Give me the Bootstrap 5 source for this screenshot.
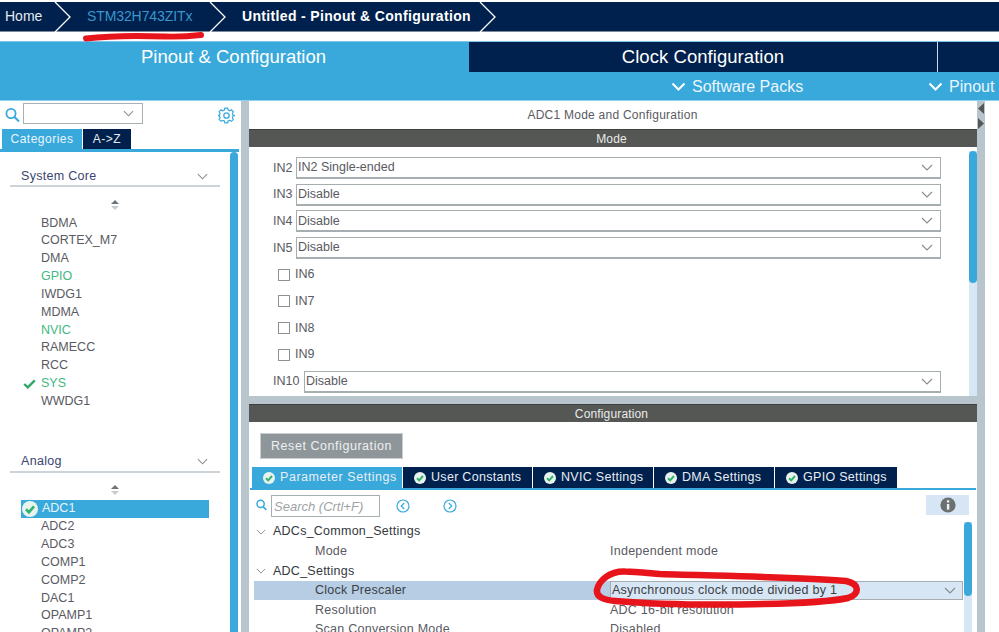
<!DOCTYPE html>
<html lang="en">
<head>
<meta charset="utf-8">
<title>STM32 Pinout</title>
<link href="https://cdn.jsdelivr.net/npm/bootstrap@5.3.0/dist/css/bootstrap.min.css" rel="stylesheet">
<style>
:root{--navy:#00214d;--sky:#39a9dc;--steel:#b9c5cc;--dark:#555755;--pale:#d6e6f5;--txt:#5a5a62;}
html,body{height:100%;overflow:hidden;background:#fff;}
body{font-family:"Liberation Sans",Arial,sans-serif;font-size:12.5px;color:var(--txt);}
.stage{position:relative;width:999px;height:632px;overflow:hidden;}
.crumbs{height:30px;margin-top:2px;background:var(--navy);color:#fff;font-size:14px;border-bottom:1px solid #7d8a9a;}
.crumb-home{width:70px;padding-left:5px;color:#e4e9ef;}
.crumb-chip{width:155px;padding-left:17px;color:#3a97cd;letter-spacing:-.1px;}
.crumb-now{width:270px;padding-left:17px;font-weight:700;letter-spacing:.34px;}
.topgap{height:9px;}
.perspectives{height:59px;background:var(--sky);border-top:1px solid #7fc3e6;}
.tab-active{width:469px;height:30px;color:#fff;font-size:18.5px;padding-right:2px;}
.tab-dark{height:30px;background:var(--navy);color:#fff;font-size:18.5px;letter-spacing:.05px;}
.tab-clock{width:469px;border-right:1px solid #cfd8e0;}
.tab-extra{flex:1;}
.perspective-sub{height:28px;color:#eaf6fc;font-size:16px;padding-top:1px;}
.perspective-sub svg{margin-right:6px;}
.sub-pack{width:257px;}
.sub-pin{width:71px;}
.workspace{height:532px;border-top:1px solid #8fd0ee;}
.leftpane{width:241px;}
.gutter-v{width:8px;background:var(--steel);position:relative;}
.centerpane{width:728px;}
.centerpane > *{flex:none;}
.sidegut{width:8px;background:var(--steel);position:relative;}
.sidegut svg{position:absolute;left:0;top:0;}
.restwhite{flex:1;}
.searchline{height:28px;padding:2px 0 0 5px;}
.combo-small{width:120px;height:21px;margin-left:3px;border:1px solid #a8b0b4;}
.gearbox{margin-left:75px;}
.cat-tabs{height:20px;padding-left:2px;gap:1px;font-size:12px;letter-spacing:.5px;}
.cat-on{width:80px;background:var(--sky);color:#e8f6fc;}
.cat-off{width:48px;background:var(--navy);color:#e7ebf0;}
.cat-rule{height:3px;background:var(--sky);width:239px;}
.cat-body{height:480px;}
.cat-list{width:230px;}
.cat-title{margin:15px 10px 0 10px;height:20px;padding:0 12px 0 11px;border-bottom:2px solid #ccd4d9;color:#3b4472;font-size:12.5px;letter-spacing:.3px;}
.updown{height:18px;margin:9.5px 0 0 0;}
.updown svg{margin-top:2px;}
.item-list{padding-left:41px;}
.periph{height:17.85px;line-height:17.85px;font-size:12.5px;position:relative;}
.periph-go{color:#43b883;}
.periph-check{position:absolute;left:-18px;top:4px;}
.periph-sel{margin-left:-20px;padding-left:21px;width:188px;background:var(--sky);color:#eaf6fc;}
.periph-sel svg{position:absolute;left:1px;top:1px;}
.gap-cat{height:27px;}
.bar-v{width:8px;background:var(--sky);border-radius:5px 5px 0 0;}
.left-end{width:3px;}
.mode-area{height:295px;}
.panel-title{height:28px;font-size:12px;letter-spacing:.25px;padding-right:1px;}
.dark-bar{height:18px;background:var(--dark);color:#e9ebe9;font-size:12px;border-top:1px solid #3e403e;padding-right:3px;letter-spacing:.15px;}
.mode-body{height:249px;}
.mode-list{flex:1;padding:10px 0 0 24px;}
.mode-row{height:22px;margin-bottom:4.7px;width:668px;}
.mode-lab{width:23px;font-size:12.5px;}
.mode-lab-wide{width:31px;}
.combo{flex:1;height:22px;border:1px solid #a6aeb2;border-bottom-width:2px;padding:0 7px 0 1px;font-size:12.5px;background:#fff;}
.tick{width:12px;height:12px;border:1px solid #8b9094;margin:0 5px 0 5px;flex:none;}
.track{width:8px;background:var(--pale);margin-top:4px;}
.thumb{background:var(--sky);border-radius:4px;width:8px;}
.thumb-mode{height:132px;}
.hgut{height:8px;background:var(--steel);}
.cfg-tools{height:45px;padding:11px 0 0 11px;}
.reset-btn{width:143px;height:26px;background:#8f969a;color:#eef0f1;border:1px solid #c9ced1;border-radius:0;font-size:12.5px;padding:0;letter-spacing:.55px;}
.cfg-tabs{height:21px;padding-left:3px;font-size:12.5px;letter-spacing:.3px;color:#e8edf2;}
.cfg-tab{height:21px;background:var(--navy);margin-right:1px;padding-left:11px;}
.cfg-tab svg{margin-right:5px;flex:none;}
.cfg-on{background:var(--sky);width:150px;letter-spacing:.55px;}
.cfg-user{width:129px;}
.cfg-nvic{width:120px;}
.cfg-dma{width:120px;}
.cfg-gpio{width:122px;}
.cfg-rule{height:2px;background:var(--sky);margin:0 1px 0 1px;}
.cfg-search{height:32px;padding:5px 0 0 7px;}
.find{width:109px;height:22px;border:1px solid #a6aeb2;margin-left:4px;padding:1px 0 0 2px;font-style:italic;color:#9ea3a6;font-size:13px;}
.nav-round{margin-left:16px;}
.nav-round-b{margin-left:33px;}
.infobox{width:43px;height:20px;background:var(--pale);margin-left:469px;}
.tree-zone{height:110px;}
.tree-list{width:714px;padding-left:5px;}
.tree-row{height:19.6px;font-size:12.5px;letter-spacing:.25px;}
.tree-head{color:#34383d;}
.tree-head svg{margin:0 7px 0 2px;}
.tree-key{width:356px;padding-left:61px;}
.tree-on{background:#b6cde4;color:#3c3f44;}
.tree-pick{flex:1;height:19px;background:var(--pale);border:1px solid #a6aeb2;padding:0 6px 0 1px;}
.tree-track{width:8px;background:var(--pale);margin-left:1px;}
.thumb-tree{height:74px;}
.ink{position:absolute;left:0;top:0;pointer-events:none;}
</style>
</head>
<body>
<svg width="0" height="0" class="position-absolute">
<symbol id="chev" viewBox="0 0 12 7"><polyline points="1,1 6,6 11,1" fill="none" stroke="#858b90" stroke-width="1.1"/></symbol>
<symbol id="okdot" viewBox="0 0 12 12"><circle cx="6" cy="6" r="6" fill="#e9f3ee"/><polyline points="3,6.2 5.2,8.4 9,4" fill="none" stroke="#32b36f" stroke-width="2"/></symbol>
</svg>
<div class="stage">
  <div class="crumbs d-flex align-items-center">
    <div class="crumb-home">Home</div>
    <div class="crumb-chip">STM32H743ZITx</div>
    <div class="crumb-now">Untitled - Pinout &amp; Configuration</div>
  </div>
  <div class="topgap"></div>
  <div class="perspectives d-flex flex-column">
    <div class="d-flex">
      <div class="tab-active d-flex align-items-center justify-content-center">Pinout &amp; Configuration</div>
      <div class="tab-dark tab-clock d-flex align-items-center justify-content-center">Clock Configuration</div>
      <div class="tab-dark tab-extra"></div>
    </div>
    <div class="d-flex align-items-center perspective-sub justify-content-end">
      <div class="sub-pack d-flex align-items-center"><svg width="15" height="9" viewBox="0 0 15 9"><polyline points="1.5,1.5 7.5,7.5 13.5,1.5" fill="none" stroke="#fff" stroke-width="2"/></svg>Software Packs</div>
      <div class="sub-pin d-flex align-items-center"><svg width="15" height="9" viewBox="0 0 15 9"><polyline points="1.5,1.5 7.5,7.5 13.5,1.5" fill="none" stroke="#fff" stroke-width="2"/></svg>Pinout</div>
    </div>
  </div>
  <div class="workspace d-flex">
    <div class="leftpane d-flex flex-column">
      <div class="searchline d-flex align-items-start">
        <svg width="15" height="16" viewBox="0 0 15 16" class="mt-1"><circle cx="6" cy="6.5" r="4.6" fill="none" stroke="#39a9dc" stroke-width="1.8"/><line x1="9.5" y1="10" x2="14" y2="14.5" stroke="#39a9dc" stroke-width="2"/></svg>
        <div class="combo-small d-flex align-items-center justify-content-end pe-2"><svg width="11" height="7"><use href="#chev"/></svg></div>
        <svg class="gearbox mt-1" width="17" height="17" viewBox="0 0 17 17"><circle cx="8.5" cy="8.5" r="2.7" fill="none" stroke="#39a9dc" stroke-width="1.3"/><path d="M7 1h3l.4 2 1.7.8 1.8-1 2 2.1-1.1 1.7.7 1.7 2 .4v0l-2 .6-.6 1.7 1 1.8-2 2-1.8-1-1.7.7-.4 2H7l-.4-2-1.7-.7-1.8 1-2-2 1-1.8-.7-1.7-2-.5 2-.5.7-1.7-1-1.8 2-2 1.8 1 1.7-.8z" transform="translate(.1 .1) scale(.96)" fill="none" stroke="#39a9dc" stroke-width="1.2"/></svg>
      </div>
      <div class="cat-tabs d-flex">
        <div class="cat-on d-flex align-items-center justify-content-center">Categories</div>
        <div class="cat-off d-flex align-items-center justify-content-center">A-&gt;Z</div>
      </div>
      <div class="cat-rule"></div>
      <div class="cat-body d-flex">
        <div class="cat-list">
          <div class="cat-title d-flex justify-content-between align-items-center"><span>System Core</span><svg width="11" height="7"><use href="#chev"/></svg></div>
          <div class="updown d-flex justify-content-center"><svg width="8" height="12" viewBox="0 0 8 12"><polygon points="4,1 8,5 0,5" fill="#6d7376"/><polygon points="4,11 8,7 0,7" fill="#c7cbce"/></svg></div>
          <div class="item-list">
            <div class="periph">BDMA</div>
            <div class="periph">CORTEX_M7</div>
            <div class="periph">DMA</div>
            <div class="periph periph-go">GPIO</div>
            <div class="periph">IWDG1</div>
            <div class="periph">MDMA</div>
            <div class="periph periph-go">NVIC</div>
            <div class="periph">RAMECC</div>
            <div class="periph">RCC</div>
            <div class="periph periph-go"><svg class="periph-check" width="13" height="10" viewBox="0 0 13 10"><polyline points="1.2,5 4.8,8.4 11.8,1.4" fill="none" stroke="#2fa866" stroke-width="2.4"/></svg>SYS</div>
            <div class="periph">WWDG1</div>
          </div>
          <div class="gap-cat"></div>
          <div class="cat-title d-flex justify-content-between align-items-center"><span>Analog</span><svg width="11" height="7"><use href="#chev"/></svg></div>
          <div class="updown d-flex justify-content-center"><svg width="8" height="12" viewBox="0 0 8 12"><polygon points="4,1 8,5 0,5" fill="#6d7376"/><polygon points="4,11 8,7 0,7" fill="#c7cbce"/></svg></div>
          <div class="item-list">
            <div class="periph periph-sel"><svg width="16" height="16"><use href="#okdot"/></svg>ADC1</div>
            <div class="periph">ADC2</div>
            <div class="periph">ADC3</div>
            <div class="periph">COMP1</div>
            <div class="periph">COMP2</div>
            <div class="periph">DAC1</div>
            <div class="periph">OPAMP1</div>
            <div class="periph">OPAMP2</div>
          </div>
        </div>
        <div class="bar-v"></div>
        <div class="left-end"></div>
      </div>
    </div>
    <div class="gutter-v"></div>
    <div class="centerpane d-flex flex-column">
      <div class="mode-area d-flex flex-column">
        <div class="panel-title d-flex align-items-center justify-content-center">ADC1 Mode and Configuration</div>
        <div class="dark-bar d-flex align-items-center justify-content-center">Mode</div>
        <div class="mode-body d-flex">
          <div class="mode-list">
            <div class="mode-row d-flex align-items-center"><div class="mode-lab">IN2</div><div class="combo d-flex align-items-center justify-content-between"><span>IN2 Single-ended</span><svg width="12" height="7"><use href="#chev"/></svg></div></div>
            <div class="mode-row d-flex align-items-center"><div class="mode-lab">IN3</div><div class="combo d-flex align-items-center justify-content-between"><span>Disable</span><svg width="12" height="7"><use href="#chev"/></svg></div></div>
            <div class="mode-row d-flex align-items-center"><div class="mode-lab">IN4</div><div class="combo d-flex align-items-center justify-content-between"><span>Disable</span><svg width="12" height="7"><use href="#chev"/></svg></div></div>
            <div class="mode-row d-flex align-items-center"><div class="mode-lab">IN5</div><div class="combo d-flex align-items-center justify-content-between"><span>Disable</span><svg width="12" height="7"><use href="#chev"/></svg></div></div>
            <div class="mode-row d-flex align-items-center"><div class="tick"></div><span>IN6</span></div>
            <div class="mode-row d-flex align-items-center"><div class="tick"></div><span>IN7</span></div>
            <div class="mode-row d-flex align-items-center"><div class="tick"></div><span>IN8</span></div>
            <div class="mode-row d-flex align-items-center"><div class="tick"></div><span>IN9</span></div>
            <div class="mode-row d-flex align-items-center"><div class="mode-lab mode-lab-wide">IN10</div><div class="combo d-flex align-items-center justify-content-between"><span>Disable</span><svg width="12" height="7"><use href="#chev"/></svg></div></div>
          </div>
          <div class="track"><div class="thumb thumb-mode"></div></div>
        </div>
      </div>
      <div class="hgut"></div>
      <div class="dark-bar d-flex align-items-center justify-content-center">Configuration</div>
      <div class="cfg-tools"><button type="button" class="btn reset-btn">Reset Configuration</button></div>
      <div class="cfg-tabs d-flex">
        <div class="cfg-tab cfg-on d-flex align-items-center"><svg width="12" height="12"><use href="#okdot"/></svg>Parameter Settings</div>
        <div class="cfg-tab cfg-user d-flex align-items-center"><svg width="12" height="12"><use href="#okdot"/></svg>User Constants</div>
        <div class="cfg-tab cfg-nvic d-flex align-items-center"><svg width="12" height="12"><use href="#okdot"/></svg>NVIC Settings</div>
        <div class="cfg-tab cfg-dma d-flex align-items-center"><svg width="12" height="12"><use href="#okdot"/></svg>DMA Settings</div>
        <div class="cfg-tab cfg-gpio d-flex align-items-center"><svg width="12" height="12"><use href="#okdot"/></svg>GPIO Settings</div>
      </div>
      <div class="cfg-rule"></div>
      <div class="cfg-search d-flex align-items-start">
        <svg width="11" height="12" viewBox="0 0 11 12" class="mt-1"><circle cx="4.6" cy="4.8" r="3.6" fill="none" stroke="#39a9dc" stroke-width="1.5"/><line x1="7.2" y1="7.6" x2="10.4" y2="11" stroke="#39a9dc" stroke-width="1.7"/></svg>
        <div class="find d-flex align-items-center">Search (Crtl+F)</div>
        <svg class="nav-round mt-1" width="14" height="14" viewBox="0 0 14 14"><circle cx="7" cy="7" r="6" fill="none" stroke="#39a9dc" stroke-width="1.2"/><polyline points="8.2,4 5.2,7 8.2,10" fill="none" stroke="#39a9dc" stroke-width="1.2"/></svg>
        <svg class="nav-round-b mt-1" width="14" height="14" viewBox="0 0 14 14"><circle cx="7" cy="7" r="6" fill="none" stroke="#39a9dc" stroke-width="1.2"/><polyline points="5.8,4 8.8,7 5.8,10" fill="none" stroke="#39a9dc" stroke-width="1.2"/></svg>
        <div class="infobox d-flex align-items-center justify-content-center"><svg width="16" height="16" viewBox="0 0 16 16"><circle cx="8" cy="8" r="7.6" fill="#6d7071"/><rect x="6.9" y="7" width="2.4" height="5.6" fill="#eef3f8"/><rect x="6.9" y="3.3" width="2.4" height="2.2" fill="#eef3f8"/></svg></div>
      </div>
      <div class="tree-zone d-flex">
        <div class="tree-list">
          <div class="tree-row tree-head d-flex align-items-center"><svg width="10" height="6"><use href="#chev"/></svg>ADCs_Common_Settings</div>
          <div class="tree-row d-flex align-items-center"><div class="tree-key">Mode</div><div>Independent mode</div></div>
          <div class="tree-row tree-head d-flex align-items-center"><svg width="10" height="6"><use href="#chev"/></svg>ADC_Settings</div>
          <div class="tree-row tree-on d-flex align-items-center"><div class="tree-key">Clock Prescaler</div><div class="tree-pick d-flex align-items-center justify-content-between"><span>Asynchronous clock mode divided by 1</span><svg width="12" height="7"><use href="#chev"/></svg></div></div>
          <div class="tree-row d-flex align-items-center"><div class="tree-key">Resolution</div><div>ADC 16-bit resolution</div></div>
          <div class="tree-row d-flex align-items-center"><div class="tree-key">Scan Conversion Mode</div><div>Disabled</div></div>
        </div>
        <div class="tree-track"><div class="thumb thumb-tree"></div></div>
      </div>
    </div>
    <div class="sidegut"><svg width="8" height="30" viewBox="0 0 8 30"><polygon points="7,2 7,13 1,7.5" fill="#555755"/><polygon points="1,17 1,28 7,22.5" fill="#555755"/></svg></div>
    <div class="restwhite"></div>
  </div>
  <svg class="ink" width="999" height="632" viewBox="0 0 999 632">
    <g fill="none" stroke="#fff" stroke-width="1.3"><polyline points="55,2 70,17 55,32"/><polyline points="210,2 225,17 210,32"/><polyline points="480,2 495,17 480,32"/></g>
    <path d="M86 38.5 C115 35 140 35.5 165 36.5 C180 37 192 36 201 35" fill="none" stroke="#e8141c" stroke-width="6" stroke-linecap="round"/>
    <path d="M625 571.5 C610 571 599 580 597 590 C596 597 604 600 615 601 C650 604 690 605 740 604.5 C780 604 825 603 848 598 C860 594 860 584 846 581 C800 577 720 576 660 574 C648 573 635 571.5 625 571.5Z" fill="none" stroke="#e8141c" stroke-width="6.5" stroke-linejoin="round"/>
  </svg>
</div>
<script src="https://cdn.jsdelivr.net/npm/bootstrap@5.3.0/dist/js/bootstrap.bundle.min.js"></script>
</body>
</html>
